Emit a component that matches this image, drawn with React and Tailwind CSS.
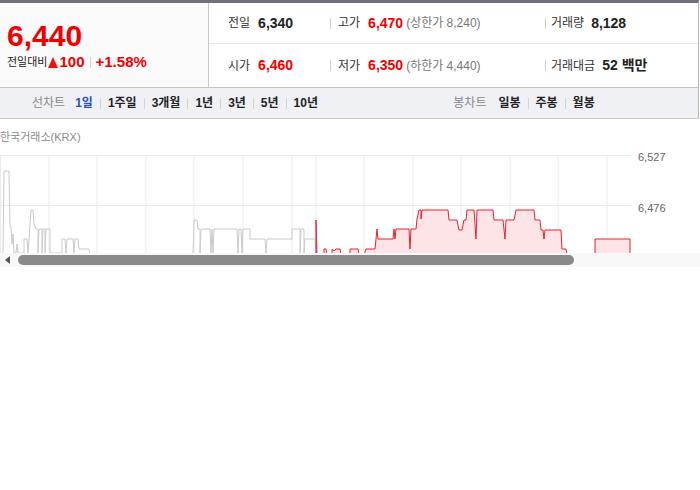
const FONT = { fontFamily: '"Liberation Sans", "Noto Sans CJK KR", sans-serif' };

const Sep = () => <span className="inline-block w-px h-[11px] bg-[#d4d4d4] mx-[7px]" />;

const periods = ["1일", "1주일", "3개월", "1년", "3년", "5년", "10년"];
const candles = ["일봉", "주봉", "월봉"];

const grayPath =
  "M3,256 L4,172 L9,172 L10,228 L11,228 L12,245 L13,235 L14,254 L16,254 L17,245 L18,254 L24,254 L24,240 L27,240 L28,254 L29,240 L31,211 L33,211 L34,225 L36,230 L38,230 L38,254 L39,230 L42,230 L42,254 L43,230 L45,230 L45,254 L46,230 L50,230 L50,254 L51,254 L62,254 L62,240 L65,240 L66,254 L67,240 L73,240 L74,254 L75,240 L78,240 L79,250 L89,250 L90,256 " +
  "M193,256 L194,221 L197,221 L198,230 L200,230 L200,254 L201,230 L210,230 L211,254 L212,230 L213,254 L214,230 L237,230 L238,254 L239,230 L241,230 L242,254 L243,230 L250,230 L250,240 L265,240 L266,254 L267,240 L292,240 L292,230 L300,230 L300,254 L301,230 L304,230 L304,254 L305,240 L315,240 L316,256";

const redPts =
  "316,256 316,221 317,256 324,256 324,250 326,250 327,256 332,256 332,250 334,252 336,250 340,250 341,256 350,256 350,250 358,250 359,256 364,256 366,250 375,250 377,230 378,240 393,240 394,230 395,240 396,230 409,230 410,250 411,230 416,230 417,220 419,211 421,211 421,220 422,211 448,211 449,221 457,221 459,231 462,231 464,221 466,221 467,211 474,211 476,240 477,211 493,211 494,221 503,221 505,240 506,221 514,221 516,211 534,211 535,221 540,221 541,231 543,231 544,240 545,231 561,231 562,250 566,250 567,256 595,256 595,240 630,240 630,256";

const vLines = [0.5, 49, 97, 146, 194, 243, 292, 316, 364, 413, 461, 510, 558, 607];

export default function App() {
  return (
    <div className="w-[700px] h-[490px] bg-white" style={FONT}>
      {/* header summary */}
      <div className="w-[699px] border-t-[3px] border-[#6e7179] flex border-b border-b-[#c4c4c4] border-r border-r-[#b8b8b8]">
        <div className="w-[209px] border-r border-[#c8c8c8] bg-[#fafafa] pl-[7px] pt-[16px]">
          <div className="text-[30px] leading-[34px] font-bold text-[#f20000]">6,440</div>
          <div className="flex items-center h-[18px]">
            <span className="text-[11px] text-[#222]">전일대비</span>
            <span className="ml-[1px] w-0 h-0 border-l-[5px] border-r-[5px] border-b-[11px] border-l-transparent border-r-transparent border-b-[#ee1111]" />
            <span className="ml-[1px] text-[15px] font-bold text-[#f20000]">100</span>
            <span className="inline-block w-px h-[11px] bg-[#d4d4d4] mx-[5px]" />
            <span className="text-[15px] font-bold text-[#f20000]">+1.58%</span>
          </div>
        </div>
        <div className="flex-1 bg-white">
          <div className="h-[41px] flex items-center border-b border-[#e6e6e6]">
            <div className="w-[121px] pl-[19px] flex items-center">
              <span className="text-[12px] text-[#333]">전일</span>
              <span className="ml-[8px] text-[14px] font-bold text-[#222]">6,340</span>
            </div>
            <div className="w-[215px] flex items-center">
              <span className="w-px h-[11px] bg-[#d0d0d0] mr-[7px]" />
              <span className="text-[12px] text-[#333]">고가</span>
              <span className="ml-[8px] text-[14px] font-bold text-[#f20000]">6,470</span>
              <span className="ml-[3px] text-[12px] text-[#777]">(상한가 8,240)</span>
            </div>
            <div className="flex items-center">
              <span className="w-px h-[11px] bg-[#d0d0d0] mr-[5px]" />
              <span className="text-[12px] text-[#333]">거래량</span>
              <span className="ml-[7px] text-[14px] font-bold text-[#222]">8,128</span>
            </div>
          </div>
          <div className="h-[43px] flex items-center">
            <div className="w-[121px] pl-[19px] flex items-center">
              <span className="text-[12px] text-[#333]">시가</span>
              <span className="ml-[8px] text-[14px] font-bold text-[#f20000]">6,460</span>
            </div>
            <div className="w-[215px] flex items-center">
              <span className="w-px h-[11px] bg-[#d0d0d0] mr-[7px]" />
              <span className="text-[12px] text-[#333]">저가</span>
              <span className="ml-[8px] text-[14px] font-bold text-[#f20000]">6,350</span>
              <span className="ml-[3px] text-[12px] text-[#777]">(하한가 4,440)</span>
            </div>
            <div className="flex items-center">
              <span className="w-px h-[11px] bg-[#d0d0d0] mr-[5px]" />
              <span className="text-[12px] text-[#333]">거래대금</span>
              <span className="ml-[7px] text-[14px] font-bold text-[#222]">52 백만</span>
            </div>
          </div>
        </div>
      </div>

      {/* toolbar */}
      <div className="w-[699px] h-[31px] flex bg-[#f0f1f5] border-b border-[#c8c8c8] border-r border-r-[#b8b8b8] text-[12px]">
        <div className="w-[350px] flex items-center justify-center">
          <span className="text-[#888] mr-[10px]">선차트</span>
          {periods.map((p, i) => (
            <span key={p} className="flex items-center">
              {i > 0 && <Sep />}
              <span className={i === 0 ? "font-bold text-[#2d4fb0]" : "font-bold text-[#222]"}>{p}</span>
            </span>
          ))}
        </div>
        <div className="flex-1 flex items-center justify-center">
          <span className="text-[#888] mr-[12px]">봉차트</span>
          {candles.map((p, i) => (
            <span key={p} className="flex items-center">
              {i > 0 && <Sep />}
              <span className="font-bold text-[#222]">{p}</span>
            </span>
          ))}
        </div>
      </div>

      {/* chart */}
      <div className="pt-[10px]">
        <div className="h-[16px] text-[11px] leading-[16px] text-[#8a8a8a]">한국거래소(KRX)</div>
        <div className="h-[108px] overflow-hidden">
          <svg width="700" height="108" viewBox="0 146 700 108">
            {vLines.map((x) => (
              <line key={x} x1={x} y1="156" x2={x} y2="260" stroke="#ebebeb" strokeWidth="1" />
            ))}
            <line x1="0" y1="156.5" x2="631" y2="156.5" stroke="#ebebeb" />
            <line x1="0" y1="206.5" x2="631" y2="206.5" stroke="#ebebeb" />
            <path d={grayPath} fill="none" stroke="#c9cace" strokeWidth="1" />
            <polygon points={redPts} fill="#fde5e7" stroke="none" />
            <polyline points={redPts} fill="none" stroke="#f21d2a" strokeWidth="1" />
            <g fontSize="11" fill="#666" style={FONT}>
              <text x="638" y="162">6,527</text>
              <text x="638" y="213">6,476</text>
              <text x="638" y="262">6,424</text>
            </g>
          </svg>
        </div>
        <div className="h-[14px] bg-[#f8f8f8] flex items-center">
          <span className="ml-[5px] w-0 h-0 border-t-[4px] border-b-[4px] border-r-[5px] border-t-transparent border-b-transparent border-r-[#555]" />
          <div className="ml-[8px] w-[556px] h-[10px] rounded-full bg-[#8a8a8a]" />
        </div>
      </div>
    </div>
  );
}
